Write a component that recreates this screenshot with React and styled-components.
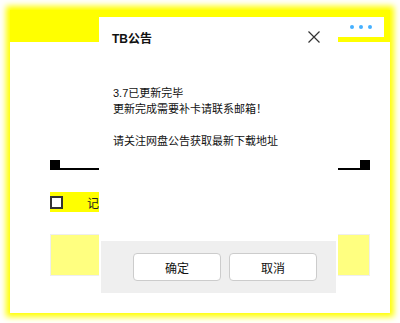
import React from 'react'
import styled, { createGlobalStyle } from 'styled-components'

const GlobalStyle = createGlobalStyle`
  body {
    margin: 0;
    background: #fff;
    font-family: "Liberation Sans", "Noto Sans CJK SC", sans-serif;
    color: #222;
  }
`

function App() {
  return (
    <>
      <GlobalStyle />
      <Frame>
        <TopBar>
          <MoreButton>
            <Dot /><Dot /><Dot />
          </MoreButton>
        </TopBar>
        <Body>
          <Slider>
            <Knob />
            <Track />
            <Knob />
          </Slider>
          <CheckRow>
            <CheckBox />
            <CheckLabel>记住我</CheckLabel>
          </CheckRow>
          <LoginButton />
        </Body>

        <Dialog>
          <DialogHeader>
            <Title>TB公告</Title>
            <Close>
              <svg width="12" height="12" viewBox="0 0 12 12">
                <path d="M0.5 0.5L11.5 11.5M11.5 0.5L0.5 11.5" stroke="#333" strokeWidth="1.2" fill="none" />
              </svg>
            </Close>
          </DialogHeader>
          <DialogText>
            <p>3.7已更新完毕</p>
            <p>更新完成需要补卡请联系邮箱！</p>
            <p>&nbsp;</p>
            <p>请关注网盘公告获取最新下载地址</p>
          </DialogText>
          <Footer>
            <Btn>确定</Btn>
            <Btn>取消</Btn>
          </Footer>
        </Dialog>
      </Frame>
    </>
  )
}

export default App

const Frame = styled.div`
  position: relative;
  margin: 10px;
  width: 380px;
  height: 303px;
  background: #fff;
  box-shadow: 0 0 6px 4px #ffff00;
`

const TopBar = styled.div`
  height: 32px;
  background: #ffff00;
  display: flex;
  justify-content: flex-end;
  align-items: flex-start;
  padding: 7px 6px 0 0;
  box-sizing: border-box;
`

const MoreButton = styled.div`
  width: 46px;
  height: 20px;
  background: #fff;
  display: flex;
  justify-content: center;
  align-items: center;
  gap: 5px;
`

const Dot = styled.span`
  width: 4px;
  height: 4px;
  border-radius: 50%;
  background: #45b0ff;
`

const Body = styled.div`
  padding: 118px 20px 0 40px;
`

const Slider = styled.div`
  display: flex;
  align-items: flex-end;
  height: 10px;
`

const Knob = styled.span`
  width: 10px;
  height: 10px;
  background: #000;
`

const Track = styled.span`
  flex: 1;
  height: 2px;
  background: #000;
`

const CheckRow = styled.div`
  margin-top: 22px;
  width: 200px;
  height: 20px;
  background: #ffff00;
  display: flex;
  align-items: center;
`

const CheckBox = styled.span`
  width: 13px;
  height: 13px;
  box-sizing: border-box;
  border: 2px solid #333;
  background: #fff;
`

const CheckLabel = styled.span`
  margin-left: 24px;
  font-size: 12px;
`

const LoginButton = styled.div`
  margin-top: 22px;
  height: 42px;
  box-sizing: border-box;
  background: #ffff80;
  border: 1px solid #eee;
`

const Dialog = styled.div`
  position: absolute;
  left: 89px;
  top: 7px;
  width: 239px;
  height: 278px;
  box-sizing: border-box;
  padding: 2px;
  background: #fff;
  display: flex;
  flex-direction: column;
`

const DialogHeader = styled.div`
  height: 36px;
  display: flex;
  align-items: center;
  justify-content: space-between;
  padding: 0 16px 0 11px;
`

const Title = styled.span`
  font-size: 12px;
  font-weight: bold;
  color: #111;
`

const Close = styled.span`
  display: flex;
  width: 12px;
  height: 12px;
`

const DialogText = styled.div`
  padding: 30px 12px 0 12px;
  font-size: 11px;
  line-height: 16px;
  color: #111;

  p {
    margin: 0;
  }
`

const Footer = styled.div`
  margin-top: auto;
  height: 52px;
  background: #efefef;
  display: flex;
  justify-content: flex-end;
  align-items: center;
  gap: 8px;
  padding-right: 19px;
`

const Btn = styled.button`
  width: 88px;
  height: 28px;
  background: #fff;
  border: 1px solid #ccc;
  border-radius: 4px;
  font-family: "Liberation Sans", "Noto Sans CJK SC", sans-serif;
  font-size: 12px;
  color: #111;
  padding: 0;
`
